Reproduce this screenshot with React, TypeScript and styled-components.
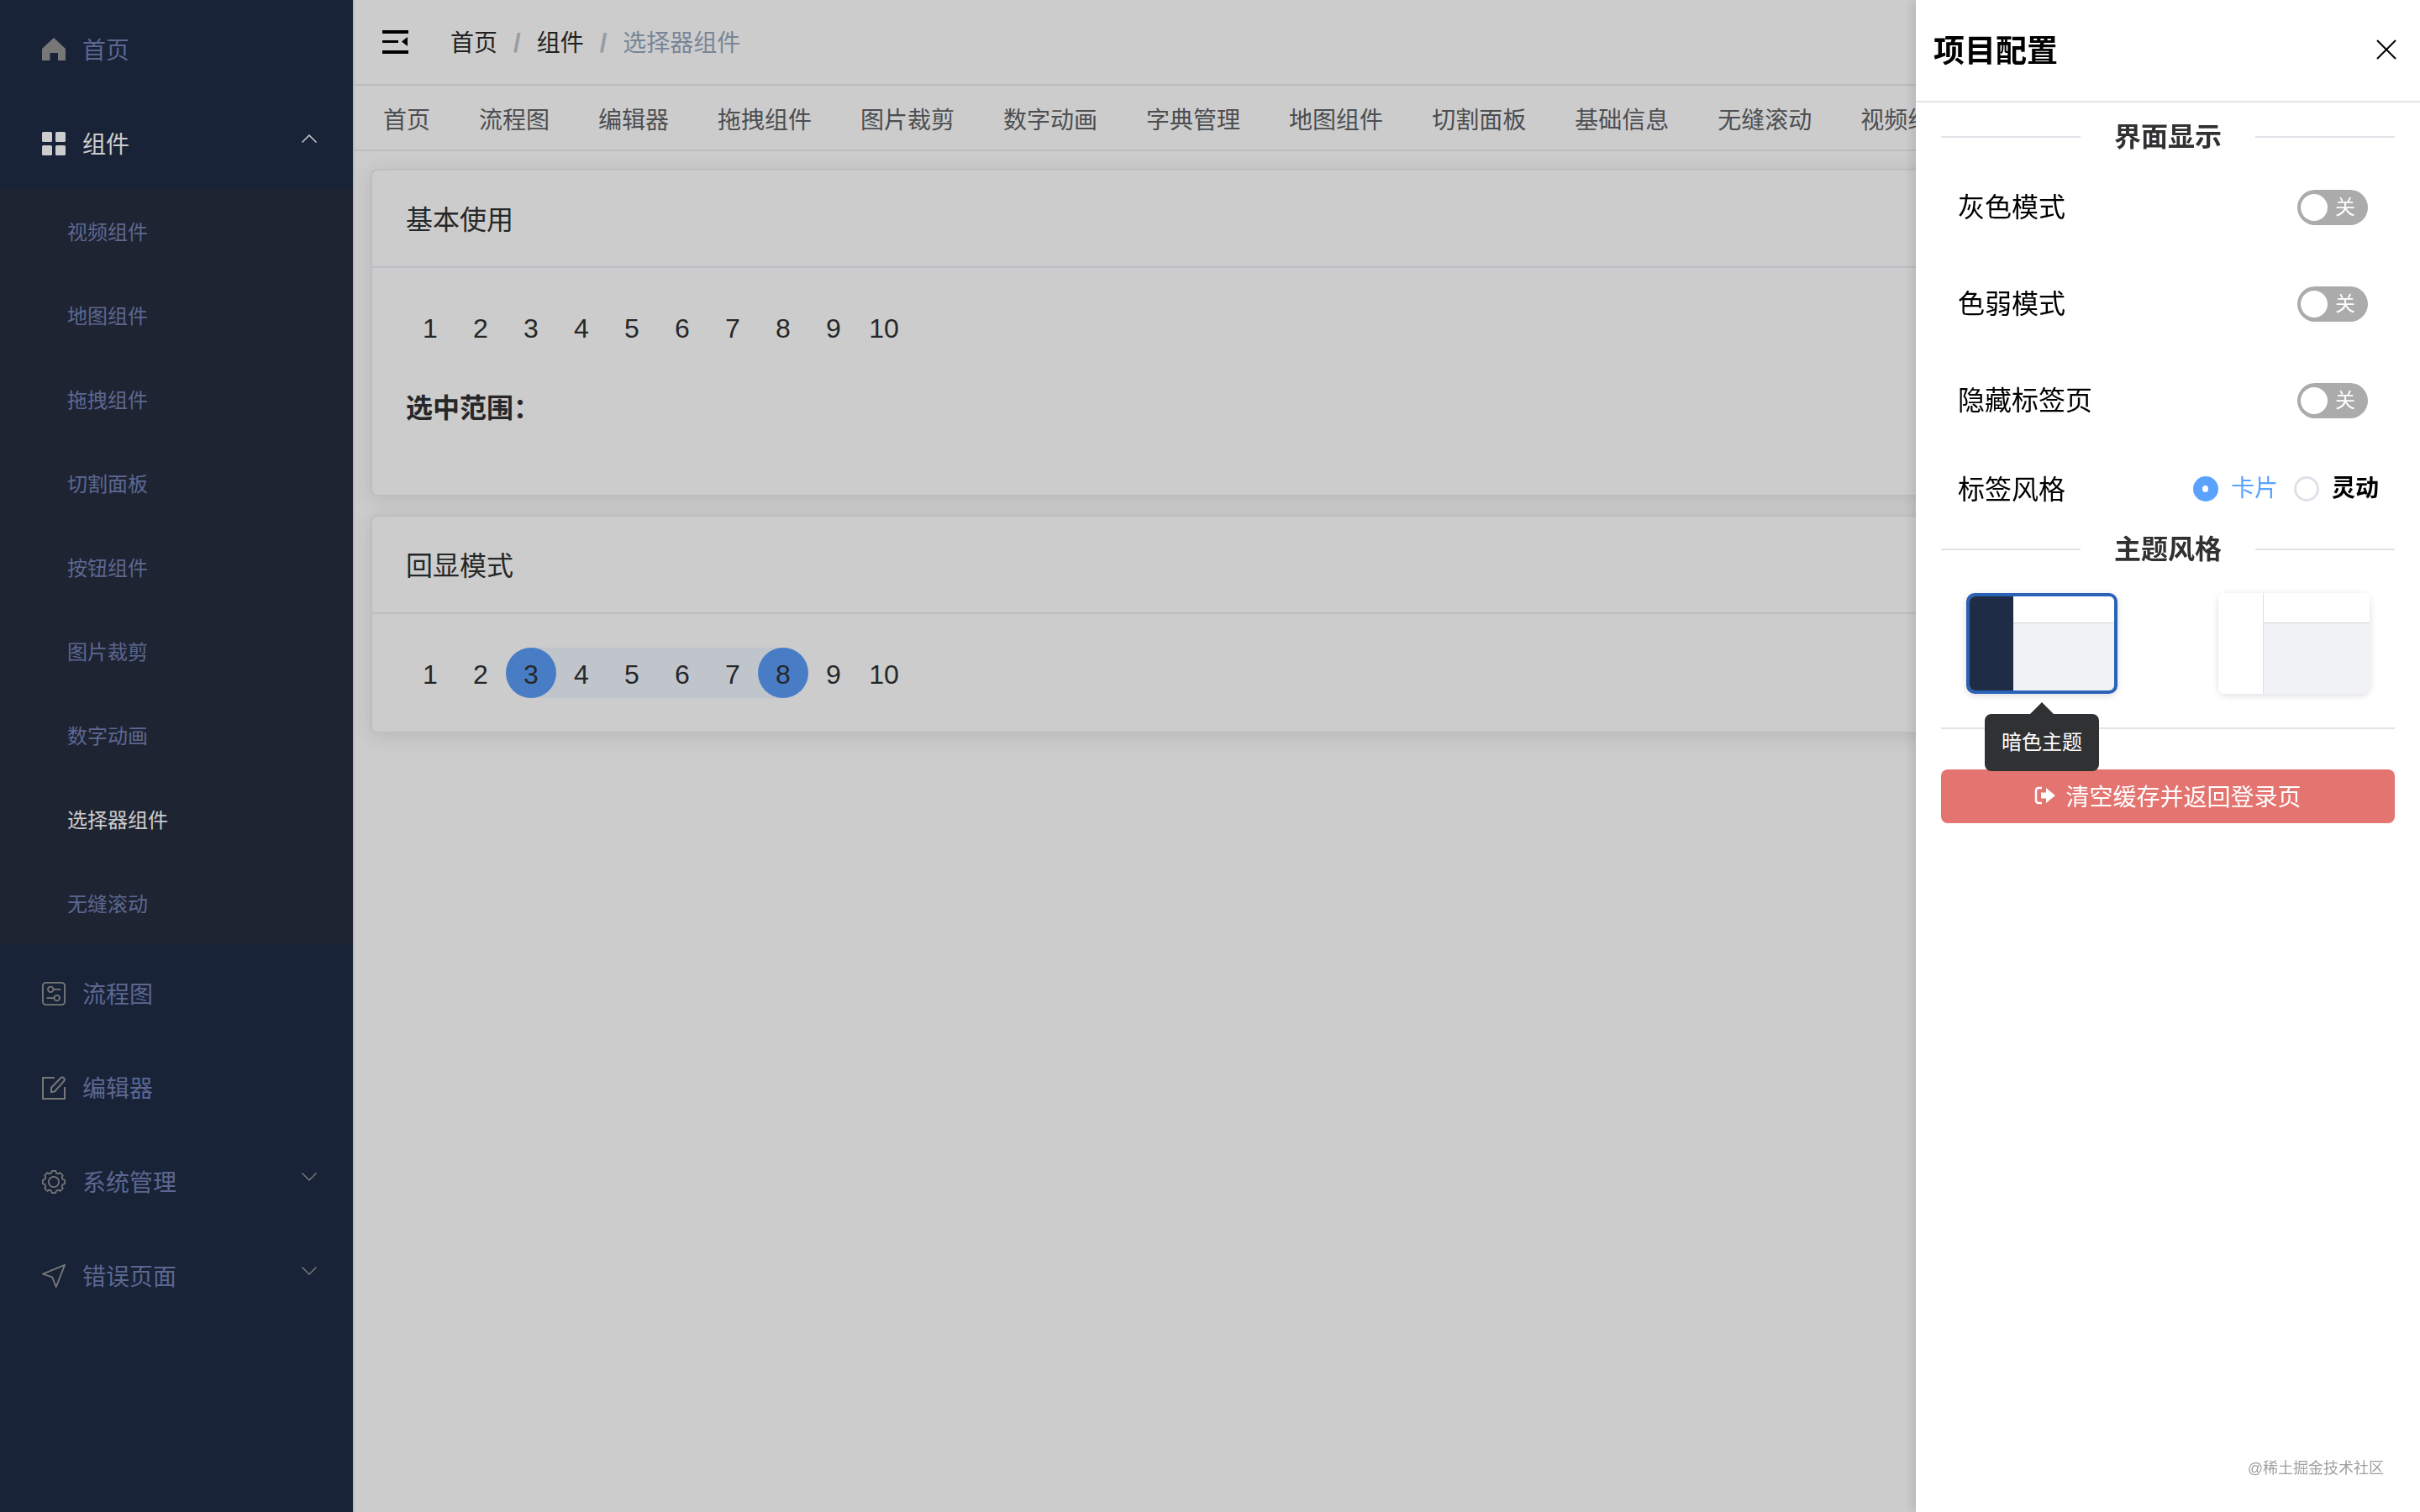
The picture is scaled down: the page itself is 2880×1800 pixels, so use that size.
import styled, { createGlobalStyle } from 'styled-components';

const fontStack = `"Liberation Sans", "Noto Sans CJK SC", sans-serif`;

const GlobalStyle = createGlobalStyle`
  html, body {
    margin: 0;
    padding: 0;
    background: #fff;
    font-family: ${fontStack};
  }
  * { box-sizing: border-box; }
`;

const Shell = styled.div`
  display: flex;
  height: 1800px;
  width: 2880px;
  overflow: hidden;
`;

const Overlay = styled.div`
  position: fixed;
  inset: 0;
  background: rgba(0, 0, 0, 0.2);
  z-index: 5;
`;

/* sidebar */
const Sidebar = styled.aside`
  flex: 0 0 420px;
  background: #1e2c46;
  border-right: 0;
`;

const MenuItem = styled.div<{ $active?: boolean }>`
  display: flex;
  align-items: center;
  height: 112px;
  padding: 6px 40px 0 50px;
  font-size: 28px;
  line-height: 40px;
  color: ${(p) => (p.$active ? '#ffffff' : '#7481b4')};
`;

const MenuIcon = styled.span<{ $active?: boolean }>`
  display: flex;
  align-items: center;
  justify-content: center;
  width: 28px;
  height: 32px;
  margin-right: 20px;
  color: ${(p) => (p.$active ? '#ffffff' : '#959595')};
`;

const MenuLabel = styled.span`
  flex: 1;
  padding-top: 4px;
`;

const Chevron = styled.svg<{ $up?: boolean }>`
  width: 18px;
  height: 10px;
  margin-right: 3px;
  margin-top: -12px;
  color: ${(p) => (p.$up ? '#ffffff' : '#959595')};
  transform: ${(p) => (p.$up ? 'rotate(180deg)' : 'none')};
`;

const SubMenu = styled.div`
  background: #262d3f;
`;

const SubItem = styled.div<{ $active?: boolean }>`
  height: 100px;
  padding: 3px 0 0 80px;
  font-size: 24px;
  line-height: 100px;
  color: ${(p) => (p.$active ? '#ffffff' : '#7481b4')};
`;

/* header, tabs */
const Main = styled.main`
  flex: 1;
  min-width: 0;
  background: #fff;
  border-left: 2px solid #ececec;
`;

const Header = styled.header`
  display: flex;
  align-items: center;
  height: 102px;
  padding-left: 33px;
  border-bottom: 2px solid #ececec;
`;

const Breadcrumb = styled.nav`
  display: flex;
  align-items: center;
  margin: 4px 0 0 49px;
  font-size: 28px;
  line-height: 40px;
  color: #2a2a2a;
`;

const Crumb = styled.span<{ $last?: boolean }>`
  color: ${(p) => (p.$last ? '#97a8be' : '#2a2a2a')};
`;

const CrumbSeparator = styled.span`
  margin: 0 19px;
  font-size: 31px;
  font-weight: 700;
  color: #c0c4cc;
`;

const Tabs = styled.div`
  display: flex;
  gap: 58px;
  align-items: center;
  height: 78px;
  padding: 7px 0 0 34px;
  border-bottom: 2px solid #ececec;
  overflow: hidden;
  white-space: nowrap;
`;

const Tab = styled.span`
  font-size: 28px;
  line-height: 40px;
  color: #606266;
`;

/* cards */
const Content = styled.div`
  display: flex;
  flex-direction: column;
  gap: 22px;
  padding: 21px 19px;
`;

const Card = styled.section`
  background: #fff;
  border: 2px solid #ebeef5;
  border-radius: 8px;
  box-shadow: 0 4px 24px rgba(0, 0, 0, 0.1);
`;

const CardHeader = styled.div`
  height: 116px;
  padding: 0 40px;
  border-bottom: 2px solid #ebeef5;
  font-size: 32px;
  line-height: 118px;
  color: #303133;
`;

const CardBody = styled.div`
  padding: 40px 39px;
`;

const Picker = styled.div`
  display: flex;
`;

const Cell = styled.div<{ $tone?: 'start' | 'end' | 'between' }>`
  position: relative;
  width: 60px;
  height: 60px;
  font-size: 32px;
  line-height: 65px;
  text-align: center;
  color: #303133;
  background: ${(p) =>
    p.$tone === 'between'
      ? '#f1f6fe'
      : p.$tone === 'start'
      ? 'linear-gradient(90deg, transparent 50%, #f1f6fe 50%)'
      : p.$tone === 'end'
      ? 'linear-gradient(90deg, #f1f6fe 50%, transparent 50%)'
      : 'transparent'};

  &::before {
    content: '';
    display: ${(p) => (p.$tone === 'start' || p.$tone === 'end' ? 'block' : 'none')};
    position: absolute;
    inset: 0;
    border-radius: 50%;
    background: #5a9df8;
  }
`;

const CellText = styled.span`
  position: relative;
`;

const RangeLabel = styled.div`
  margin: 42px 0 38px 1px;
  font-size: 32px;
  font-weight: 700;
  line-height: 50px;
  color: #303133;
`;

/* settings drawer */
const Drawer = styled.aside`
  position: fixed;
  top: 0;
  right: 0;
  width: 600px;
  height: 1800px;
  background: #fff;
  box-shadow: -4px 0 12px rgba(0, 0, 0, 0.12);
  z-index: 10;
`;

const DrawerHeader = styled.div`
  display: flex;
  align-items: center;
  justify-content: space-between;
  height: 122px;
  padding: 0 28px 2px 21px;
  border-bottom: 2px solid #e4e4ea;
`;

const DrawerTitle = styled.h2`
  margin: 6px 0 0;
  font-size: 37px;
  font-weight: 700;
  line-height: 50px;
  color: #000;
`;

const CloseIcon = styled.svg`
  width: 24px;
  height: 24px;
  color: #000;
`;

const DrawerBody = styled.div`
  padding: 21px 30px 0;
`;

const DividerRow = styled.div`
  display: flex;
  align-items: center;
  height: 40px;
`;

const DividerLine = styled.span`
  flex: 1;
  height: 2px;
  background: #e2e2e8;
`;

const DividerText = styled.span`
  padding: 0 40px;
  font-size: 32px;
  font-weight: 700;
  line-height: 40px;
  color: #303133;
`;

const SettingRow = styled.div<{ $short?: boolean }>`
  display: flex;
  align-items: center;
  justify-content: space-between;
  height: ${(p) => (p.$short ? '106px' : '115px')};
  padding: ${(p) => (p.$short ? '4px 32px 0 20px' : '12px 32px 0 20px')};
`;

const SettingLabel = styled.span`
  font-size: 32px;
  line-height: 44px;
  color: #000;
`;

const Switch = styled.div`
  display: flex;
  align-items: center;
  width: 84px;
  height: 42px;
  padding: 0 4px;
  border-radius: 21px;
  background: #ababab;
`;

const SwitchThumb = styled.span`
  width: 32px;
  height: 32px;
  border-radius: 50%;
  background: #fff;
`;

const SwitchText = styled.span`
  margin-left: 9px;
  font-size: 24px;
  line-height: 32px;
  color: #fff;
`;

const RadioGroup = styled.div`
  display: flex;
  align-items: center;
  margin: -2px -13px 0 0;
`;

const RadioDot = styled.span<{ $checked?: boolean }>`
  display: flex;
  align-items: center;
  justify-content: center;
  width: 30px;
  height: 30px;
  margin-right: 15px;
  border-radius: 50%;
  border: ${(p) => (p.$checked ? '0' : '3px solid #dfe1e8')};
  background: ${(p) => (p.$checked ? '#5ba2ff' : '#fff')};

  &::after {
    content: '';
    display: ${(p) => (p.$checked ? 'block' : 'none')};
    width: 7px;
    height: 8px;
    border-radius: 50%;
    background: #fff;
  }
`;

const RadioText = styled.span<{ $checked?: boolean }>`
  margin-right: ${(p) => (p.$checked ? '19px' : '0')};
  font-size: 28px;
  font-weight: ${(p) => (p.$checked ? 400 : 700)};
  line-height: 40px;
  color: ${(p) => (p.$checked ? '#5ba2ff' : '#000')};
`;

const ThemeRow = styled.div`
  display: flex;
  justify-content: space-between;
  margin-top: 32px;
  padding: 0 30px;
`;

const ThemeCard = styled.div<{ $selected?: boolean }>`
  position: relative;
  display: flex;
  width: 180px;
  height: 120px;
  border-radius: 10px;
  border: ${(p) => (p.$selected ? '4px solid #2a62b8' : '0')};
  box-shadow: 0 2px 8px rgba(0, 0, 0, 0.14);
  background: #f0f2f5;
`;

const ThemeSide = styled.div<{ $dark?: boolean }>`
  flex: 0 0 ${(p) => (p.$dark ? '52px' : '54px')};
  border-radius: 6px 0 0 6px;
  background: ${(p) => (p.$dark ? '#1e2c46' : '#fff')};
  border-right: ${(p) => (p.$dark ? '0' : '1px solid #dcdfe6')};
`;

const ThemeHead = styled.div<{ $dark?: boolean }>`
  flex: 1;
  height: ${(p) => (p.$dark ? '32px' : '36px')};
  border-radius: 0 6px 0 0;
  background: #fff;
  border-bottom: 1px solid #d4d4d8;
`;

const Tooltip = styled.div`
  position: absolute;
  top: 140px;
  left: 18px;
  width: 136px;
  height: 68px;
  border-radius: 8px;
  background: #303133;
  font-size: 24px;
  line-height: 68px;
  text-align: center;
  color: #fff;
  z-index: 2;

  &::before {
    content: '';
    position: absolute;
    top: -14px;
    left: 54px;
    border-left: 14px solid transparent;
    border-right: 14px solid transparent;
    border-bottom: 14px solid #303133;
  }
`;

const RuleLine = styled.div`
  height: 2px;
  margin-top: 40px;
  background: #e2e2e8;
`;

const LogoutButton = styled.button`
  display: flex;
  align-items: center;
  justify-content: center;
  gap: 12px;
  width: 540px;
  height: 64px;
  margin-top: 48px;
  padding: 0 0 2px;
  border: 0;
  border-radius: 8px;
  background: #e47470;
  font-family: ${fontStack};
  font-size: 28px;
  color: #fff;
`;

const Watermark = styled.div`
  position: absolute;
  right: 43px;
  bottom: 38px;
  font-size: 18px;
  line-height: 28px;
  color: #a0a0a0;
`;

/* icons */
const gearPath = () => {
  const steps = 8;
  const parts: string[] = [];
  for (let i = 0; i < steps; i++) {
    const a = (i / steps) * Math.PI * 2;
    const pt = (r: number, off: number) => {
      const x = 16 + r * Math.cos(a + off);
      const y = 16 + r * Math.sin(a + off);
      return `${x.toFixed(2)} ${y.toFixed(2)}`;
    };
    parts.push(`${i === 0 ? 'M' : 'L'}${pt(12.6, -0.28)}`, `L${pt(15.2, -0.17)}`, `L${pt(15.2, 0.17)}`, `L${pt(12.6, 0.28)}`);
  }
  return parts.join(' ') + ' Z';
};

const HomeIcon = () => (
  <svg width="28" height="28" viewBox="0 0 28 28">
    <path fill="currentColor" d="M14 0 L28 13 V27 H19 V18 H9.5 V27 H0 V13 Z" />
  </svg>
);

const GridIcon = () => (
  <svg width="28" height="28" viewBox="0 0 28 28" fill="currentColor">
    <rect x="0" y="0" width="12" height="12" rx="1.5" />
    <rect x="16" y="0" width="12" height="12" rx="1.5" />
    <rect x="0" y="16" width="12" height="12" rx="1.5" />
    <rect x="16" y="16" width="12" height="12" rx="1.5" />
  </svg>
);

const FlowIcon = () => (
  <svg width="30" height="30" viewBox="0 0 30 30" fill="none" stroke="currentColor" strokeWidth="2">
    <rect x="1" y="1" width="28" height="28" rx="4" />
    <circle cx="11" cy="9.5" r="3.5" />
    <path d="M14.5 9.5 H24" />
    <circle cx="19" cy="20.5" r="3.5" />
    <path d="M6 20.5 H15.5" />
  </svg>
);

const EditIcon = () => (
  <svg width="28" height="28" viewBox="0 0 28 28" fill="none" stroke="currentColor" strokeWidth="2">
    <path d="M15 2 H1 V27 H27 V13" />
    <path d="M11 19 V14 L22 2.5 a2.6 2.6 0 0 1 4 3.6 L15 18.5 Z" />
  </svg>
);

const GearIcon = () => (
  <svg width="32" height="32" viewBox="0 0 32 32" fill="none" stroke="currentColor" strokeWidth="2" strokeLinejoin="round">
    <path d={gearPath()} />
    <circle cx="16" cy="16" r="7" />
  </svg>
);

const SendIcon = () => (
  <svg width="30" height="30" viewBox="0 0 30 30" fill="none" stroke="currentColor" strokeWidth="2" strokeLinejoin="round">
    <path d="M29 1 L1 12.5 L13 16.5 L18 29 Z" />
  </svg>
);

const CollapseIcon = () => (
  <svg width="32" height="28" viewBox="0 0 32 28" fill="#000">
    <rect x="0" y="0" width="31" height="4" />
    <rect x="0" y="12" width="19" height="3" />
    <rect x="0" y="24" width="31" height="4" />
    <path d="M30 8 V19 L23 13.5 Z" />
  </svg>
);

const LogoutIcon = () => (
  <svg width="25" height="22" viewBox="0 0 25 22">
    <path d="M9 2 H5 a3 3 0 0 0 -3 3 V17 a3 3 0 0 0 3 3 H9" fill="none" stroke="#fff" strokeWidth="2.5" />
    <path d="M8 7.5 H14 V2 L25 11 L14 20 V14.5 H8 Z" fill="#fff" />
  </svg>
);

const ChevronIcon = ({ up }: { up?: boolean }) => (
  <Chevron $up={up} viewBox="0 0 18 10" fill="none" stroke="currentColor" strokeWidth="1.5">
    <path d="M0.5 0.5 L9 9 L17.5 0.5" />
  </Chevron>
);

const subItems = ['视频组件', '地图组件', '拖拽组件', '切割面板', '按钮组件', '图片裁剪', '数字动画', '选择器组件', '无缝滚动'];
const tabs = ['首页', '流程图', '编辑器', '拖拽组件', '图片裁剪', '数字动画', '字典管理', '地图组件', '切割面板', '基础信息', '无缝滚动', '视频组件'];
const numbers = [1, 2, 3, 4, 5, 6, 7, 8, 9, 10];
const settings = ['灰色模式', '色弱模式', '隐藏标签页'];

const toneFor = (n: number, start?: number, end?: number) => {
  if (start === undefined || end === undefined) return undefined;
  if (n === start) return 'start' as const;
  if (n === end) return 'end' as const;
  if (n > start && n < end) return 'between' as const;
  return undefined;
};

const NumberPicker = ({ start, end }: { start?: number; end?: number }) => (
  <Picker>
    {numbers.map((n) => (
      <Cell key={n} $tone={toneFor(n, start, end)}>
        <CellText>{n}</CellText>
      </Cell>
    ))}
  </Picker>
);

const SectionDivider = ({ title }: { title: string }) => (
  <DividerRow>
    <DividerLine />
    <DividerText>{title}</DividerText>
    <DividerLine />
  </DividerRow>
);

const App = () => (
  <>
    <GlobalStyle />
    <Shell>
      <Sidebar>
        <MenuItem>
          <MenuIcon><HomeIcon /></MenuIcon>
          <MenuLabel>首页</MenuLabel>
        </MenuItem>
        <MenuItem $active>
          <MenuIcon $active><GridIcon /></MenuIcon>
          <MenuLabel>组件</MenuLabel>
          <ChevronIcon up />
        </MenuItem>
        <SubMenu>
          {subItems.map((item) => (
            <SubItem key={item} $active={item === '选择器组件'}>{item}</SubItem>
          ))}
        </SubMenu>
        <MenuItem>
          <MenuIcon><FlowIcon /></MenuIcon>
          <MenuLabel>流程图</MenuLabel>
        </MenuItem>
        <MenuItem>
          <MenuIcon><EditIcon /></MenuIcon>
          <MenuLabel>编辑器</MenuLabel>
        </MenuItem>
        <MenuItem>
          <MenuIcon><GearIcon /></MenuIcon>
          <MenuLabel>系统管理</MenuLabel>
          <ChevronIcon />
        </MenuItem>
        <MenuItem>
          <MenuIcon><SendIcon /></MenuIcon>
          <MenuLabel>错误页面</MenuLabel>
          <ChevronIcon />
        </MenuItem>
      </Sidebar>

      <Main>
        <Header>
          <CollapseIcon />
          <Breadcrumb>
            <Crumb>首页</Crumb>
            <CrumbSeparator>/</CrumbSeparator>
            <Crumb>组件</Crumb>
            <CrumbSeparator>/</CrumbSeparator>
            <Crumb $last>选择器组件</Crumb>
          </Breadcrumb>
        </Header>
        <Tabs>
          {tabs.map((tab) => (
            <Tab key={tab}>{tab}</Tab>
          ))}
        </Tabs>
        <Content>
          <Card>
            <CardHeader>基本使用</CardHeader>
            <CardBody>
              <NumberPicker />
              <RangeLabel>选中范围：</RangeLabel>
            </CardBody>
          </Card>
          <Card>
            <CardHeader>回显模式</CardHeader>
            <CardBody>
              <NumberPicker start={3} end={8} />
            </CardBody>
          </Card>
        </Content>
      </Main>
    </Shell>
    <Overlay />

    <Drawer>
      <DrawerHeader>
        <DrawerTitle>项目配置</DrawerTitle>
        <CloseIcon viewBox="0 0 24 24" fill="none" stroke="currentColor" strokeWidth="2">
          <path d="M1 1 L23 23 M23 1 L1 23" />
        </CloseIcon>
      </DrawerHeader>
      <DrawerBody>
        <SectionDivider title="界面显示" />
        {settings.map((label) => (
          <SettingRow key={label}>
            <SettingLabel>{label}</SettingLabel>
            <Switch>
              <SwitchThumb />
              <SwitchText>关</SwitchText>
            </Switch>
          </SettingRow>
        ))}
        <SettingRow $short>
          <SettingLabel>标签风格</SettingLabel>
          <RadioGroup>
            <RadioDot $checked />
            <RadioText $checked>卡片</RadioText>
            <RadioDot />
            <RadioText>灵动</RadioText>
          </RadioGroup>
        </SettingRow>
        <SectionDivider title="主题风格" />
        <ThemeRow>
          <ThemeCard $selected>
            <ThemeSide $dark />
            <ThemeHead $dark />
            <Tooltip>暗色主题</Tooltip>
          </ThemeCard>
          <ThemeCard>
            <ThemeSide />
            <ThemeHead />
          </ThemeCard>
        </ThemeRow>
        <RuleLine />
        <LogoutButton>
          <LogoutIcon />
          清空缓存并返回登录页
        </LogoutButton>
      </DrawerBody>
      <Watermark>@稀土掘金技术社区</Watermark>
    </Drawer>
  </>
);

export default App;
